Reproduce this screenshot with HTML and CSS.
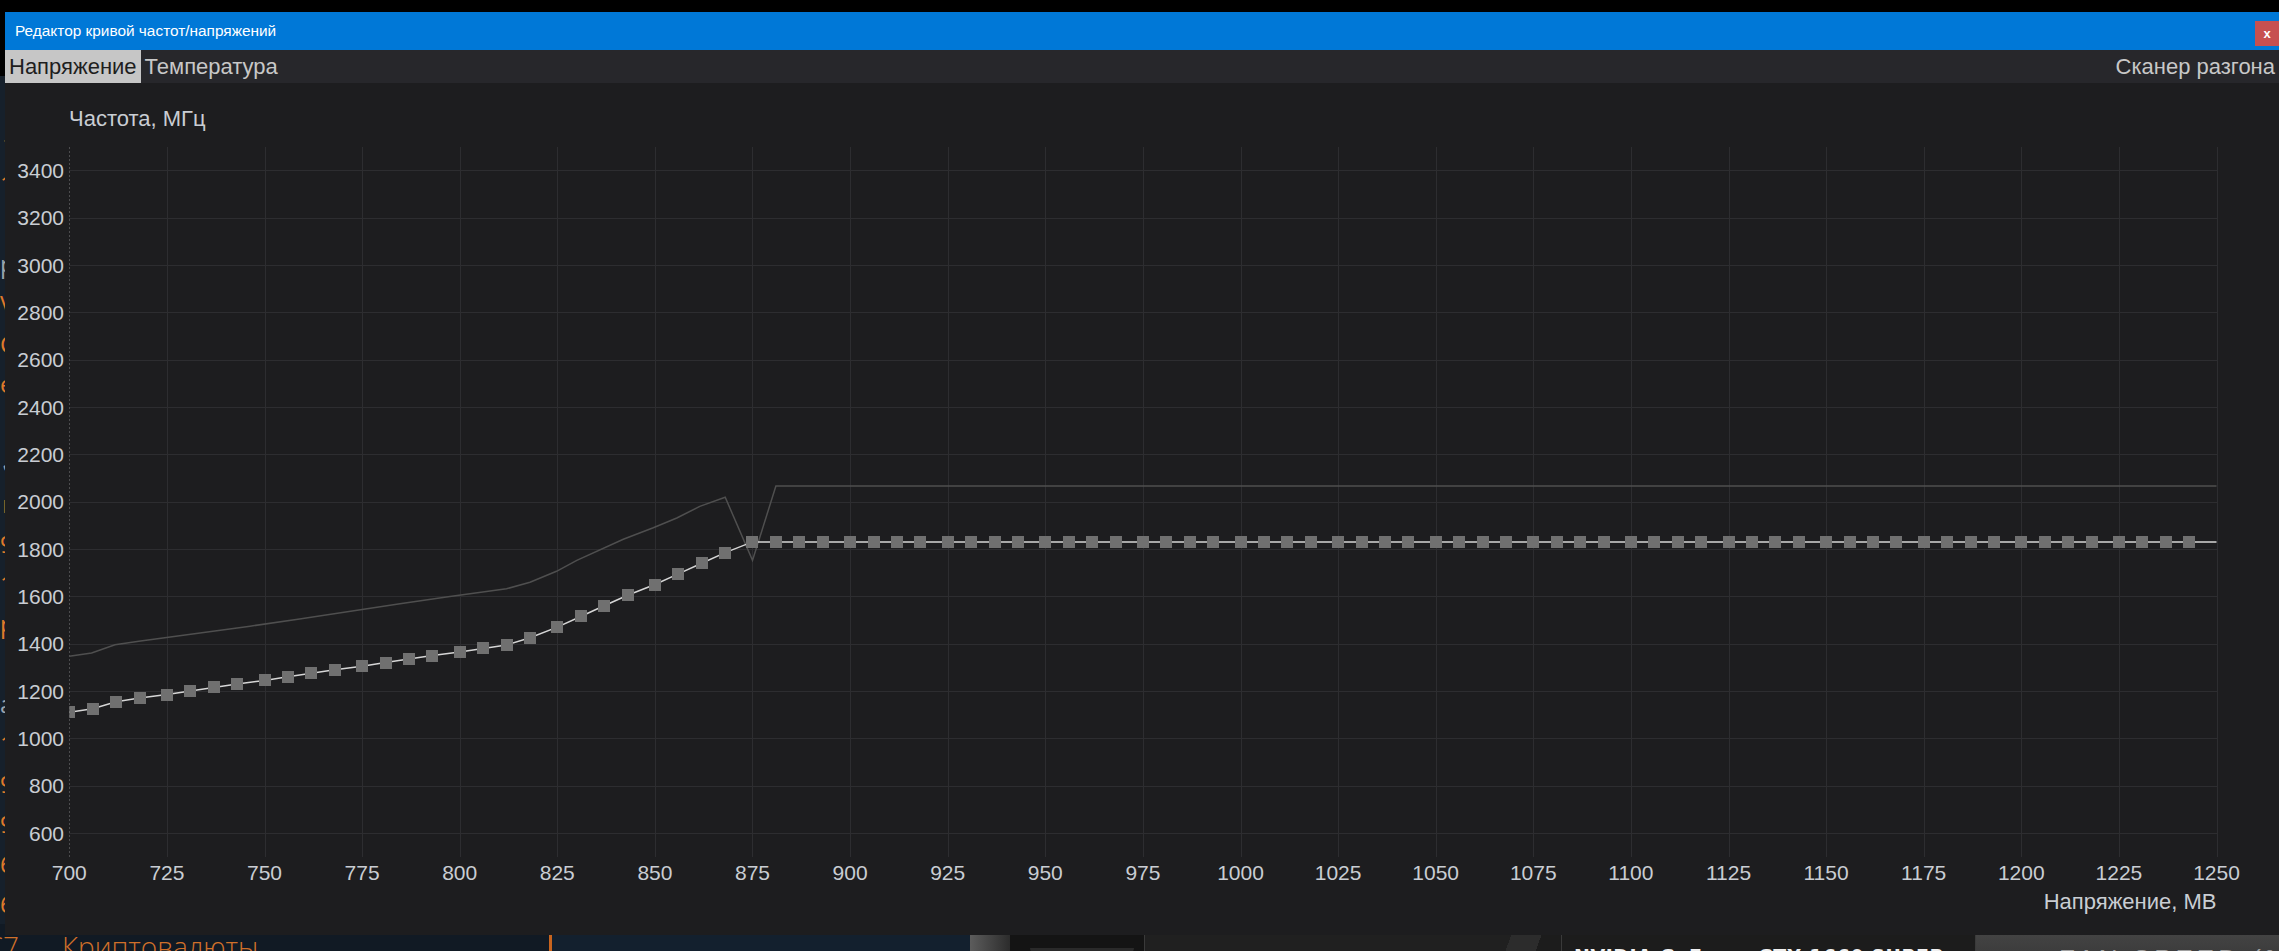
FILE: index.html
```html
<!DOCTYPE html>
<html lang="ru">
<head>
<meta charset="utf-8">
<title>Редактор кривой частот/напряжений</title>
<link rel="stylesheet" href="styles.css">
</head>
<body>
<div class="app">
  <div class="app-top"></div>
  <div class="app-mid">
    <div class="app-side">
      <div class="side-text">f<br>1<br><br><span class="g">p</span><br>V<br>C<br>e<br><br><span class="g">✓</span><br>r<br>9<br>1<br>p<br><br><span class="g">a</span><br>1<br>9<br>9<br>6<br>6</div>
    </div>
  </div>
  <div class="app-bottom">
    <div class="seg seg-crypto"><span class="c7">(С7</span><span class="crypto">Криптовалюты</span></div>
    <div class="seg seg-bar"></div>
    <div class="seg seg-news"><span class="news-o">О</span><span class="news-y">й</span></div>
    <div class="seg seg-grad"></div>
    <div class="seg seg-dark"><div class="dark-shape"></div></div>
    <div class="seg seg-img"></div>
    <div class="seg seg-gpu">NVIDIA GeForce GTX 1660 SUPER</div>
    <div class="seg seg-fan">FAN SPEED (%)</div>
  </div>
</div>

<div class="window">
  <div class="titlebar">
    <span class="title">Редактор кривой частот/напряжений</span>
    <span class="close">x</span>
  </div>
  <div class="menubar">
    <span class="menu-item active">Напряжение</span>
    <span class="menu-item">Температура</span>
    <span class="menu-spacer"></span>
    <span class="menu-item">Сканер разгона</span>
  </div>
  <div class="content">
    <svg class="chart" width="2274" height="852" viewBox="0 0 2274 852">
      <defs>
        <clipPath id="plot"><rect x="64.3" y="63.7" width="2147.2" height="710"></rect></clipPath>
      </defs>
      <g id="grid" class="grid"></g>
      <line class="axis" x1="64.5" x2="64.5" y1="63.7" y2="773.7"></line>
      <g clip-path="url(#plot)">
        <polyline id="limit" class="limit" points=""></polyline>
        <polyline id="curve" class="curve" points=""></polyline>
        <g id="pts" class="pts"></g>
      </g>
      <text class="ttl" x="64" y="43">Частота, МГц</text>
      <g class="ylab">
        <text x="59" y="94.9">3400</text>
        <text x="59" y="142.2">3200</text>
        <text x="59" y="189.5">3000</text>
        <text x="59" y="236.9">2800</text>
        <text x="59" y="284.2">2600</text>
        <text x="59" y="331.5">2400</text>
        <text x="59" y="378.9">2200</text>
        <text x="59" y="426.2">2000</text>
        <text x="59" y="473.5">1800</text>
        <text x="59" y="520.9">1600</text>
        <text x="59" y="568.2">1400</text>
        <text x="59" y="615.5">1200</text>
        <text x="59" y="662.9">1000</text>
        <text x="59" y="710.2">800</text>
        <text x="59" y="757.5">600</text>
      </g>
      <g class="xlab">
        <text x="64.3" y="797">700</text>
        <text x="161.9" y="797">725</text>
        <text x="259.5" y="797">750</text>
        <text x="357.1" y="797">775</text>
        <text x="454.7" y="797">800</text>
        <text x="552.3" y="797">825</text>
        <text x="649.9" y="797">850</text>
        <text x="747.5" y="797">875</text>
        <text x="845.1" y="797">900</text>
        <text x="942.7" y="797">925</text>
        <text x="1040.3" y="797">950</text>
        <text x="1137.9" y="797">975</text>
        <text x="1235.5" y="797">1000</text>
        <text x="1333.1" y="797">1025</text>
        <text x="1430.7" y="797">1050</text>
        <text x="1528.3" y="797">1075</text>
        <text x="1625.9" y="797">1100</text>
        <text x="1723.5" y="797">1125</text>
        <text x="1821.1" y="797">1150</text>
        <text x="1918.7" y="797">1175</text>
        <text x="2016.3" y="797">1200</text>
        <text x="2113.9" y="797">1225</text>
        <text x="2211.5" y="797">1250</text>
      </g>
      <text class="ttl ttl-x" x="2211.5" y="826">Напряжение, МВ</text>
    </svg>
  </div>
</div>
<script src="script.js"></script>
</body>
</html>
```

FILE: styles.css
```css
* { box-sizing: border-box; }
html, body { margin: 0; padding: 0; }
body {
  width: 2279px;
  height: 951px;
  overflow: hidden;
  background: #000;
  font-family: "Liberation Sans", Arial, sans-serif;
  position: relative;
}

/* background application */
.app {
  height: 951px;
  display: grid;
  grid-template-rows: 76px 1fr 40px;
}
.app-top { background: #000; }
.app-mid { background: #16202b; display: flex; }
.app-side { width: 5px; overflow: hidden; padding-top: 48px; }
.side-text {
  width: 12px;
  text-align: right;
  font: 24px/40px "Open Sans", sans-serif;
  color: #e07a2a;
}
.side-text .g { color: #9aa3ad; }

.app-bottom {
  display: flex;
  background: #111a24;
  overflow: hidden;
}
.seg { height: 40px; flex: none; overflow: hidden; }
.seg-crypto {
  width: 549px;
  background: #111a24;
  display: flex;
  font: 300 28px/40px "Open Sans", sans-serif;
  color: #d0702a;
  padding-top: 2px;
}
.c7 { width: 84px; margin-left: -22px; flex: none; }
.crypto { flex: none; }
.seg-bar { width: 3px; background: #c8641e; }
.seg-news {
  width: 418px;
  background: #13202e;
  color: #f0f0f0;
  font: 700 22px/22px "Open Sans", sans-serif;
  display: flex;
  padding-top: 33px;
}
.news-o { margin-left: 46px; }
.news-y { margin-left: 160px; }
.seg-grad { width: 40px; background: linear-gradient(to right, #5c5c5c, #2c2c2c); }
.seg-dark { width: 134px; background: #141414; padding: 24px 10px 0 20px; }
.dark-shape { height: 6px; background: #2a2a2a; border-radius: 0 0 6px 6px; }
.seg-img {
  width: 418px;
  border-left: 1px solid #3a3a3a;
  border-right: 1px solid #3a3a3a;
  background: linear-gradient(110deg, #202020 86%, #2c2c2c 86%, #2c2c2c 93%, #1c1c1c 93%);
}
.seg-gpu {
  width: 414px;
  background: #1c1c1c;
  border-right: 1px solid #3a3a3a;
  color: #f0f0f0;
  font: 700 21px/21px "DejaVu Sans Condensed", "DejaVu Sans", sans-serif;
  letter-spacing: 0.6px;
  padding: 24px 0 0 12px;
  white-space: nowrap;
}
.seg-fan {
  flex: 1;
  background: linear-gradient(#474747, #383838);
  color: #a0a0a0;
  font: 26px/26px "Liberation Sans", sans-serif;
  letter-spacing: 4px;
  padding: 22px 0 0 83px;
  white-space: nowrap;
}

/* the editor window */
.window {
  position: absolute;
  left: 5px;
  top: 12px;
  width: 2274px;
  height: 923px;
  display: flex;
  flex-direction: column;
  background: #1d1d1f;
}
.titlebar {
  height: 38px;
  flex: none;
  background: #0078d7;
  display: flex;
  align-items: center;
  padding-left: 10px;
  color: #fff;
  font-size: 15.4px;
}
.title { flex: none; }
.close {
  margin-left: auto;
  align-self: flex-start;
  margin-top: 9px;
  width: 24px;
  height: 25px;
  background: #c75050;
  color: #fff;
  font: 700 13px/25px "Liberation Sans", sans-serif;
  text-align: center;
}
.menubar {
  height: 33px;
  flex: none;
  background: #27272b;
  display: flex;
  font-size: 22px;
  line-height: 33px;
  color: #c8c8c8;
}
.menu-item { padding: 0 4px; white-space: nowrap; }
.menu-item.active { background: #c6c6c6; color: #1e1e1e; }
.menu-spacer { flex: 1; }
.content { flex: 1; background: #1d1d1f; }
.chart { display: block; }
.chart text {
  font-family: "Liberation Sans", Arial, sans-serif;
  font-size: 21px;
  fill: #c9cdd3;
}
.chart .ttl { font-size: 22px; }
.ylab text { text-anchor: end; }
.xlab text { text-anchor: middle; }
.ttl-x { text-anchor: end; }
.grid line { stroke: #2d2d30; stroke-width: 1; shape-rendering: crispEdges; }
.axis { stroke: #4c4c4e; stroke-width: 1; stroke-dasharray: 2 2; shape-rendering: crispEdges; }
.limit { fill: none; stroke: #4f4f4f; stroke-width: 1.5; }
.curve { fill: none; stroke: #d6d6d6; stroke-width: 1.5; }
.pts rect { fill: #707070; shape-rendering: crispEdges; }
```

FILE: script.js
```js
(function () {
  var NS = 'http://www.w3.org/2000/svg';
  function X(v) { return 64.3 + (v - 700) * 3.904; }
  function Y(f) { return 63.7 + (3500 - f) * 0.23667; }
  function el(tag, attrs, parent) {
    var e = document.createElementNS(NS, tag);
    for (var k in attrs) e.setAttribute(k, attrs[k]);
    parent.appendChild(e);
    return e;
  }
  function fmt(list) {
    return list.map(function (p) { return p[0].toFixed(1) + ',' + p[1].toFixed(1); }).join(' ');
  }

  var grid = document.getElementById('grid');
  var L = X(700), R = X(1250), T = Y(3500), B = Y(500);
  var f, v, x, y;
  for (f = 600; f <= 3400; f += 200) {
    y = Math.round(Y(f)) + 0.5;
    el('line', { x1: L, x2: R, y1: y, y2: y }, grid);
  }
  for (v = 725; v <= 1250; v += 25) {
    x = Math.round(X(v)) + 0.5;
    el('line', { x1: x, x2: x, y1: T, y2: B }, grid);
  }

  /* V/F curve points (mV -> MHz) */
  var freqs = [1110, 1125, 1155, 1170, 1185, 1200, 1215, 1230, 1245, 1260, 1275, 1290, 1305, 1320, 1335,
    1350, 1365, 1380, 1395, 1425, 1470, 1515, 1560, 1605, 1650, 1695, 1740, 1785, 1830];
  var pts = [];
  for (var k = 0; k <= 87; k++) {
    var vv = 700 + Math.floor(6.25 * k);
    var ff = k < freqs.length ? freqs[k] : 1830;
    pts.push([X(vv), Y(ff)]);
  }
  var linePts = pts.slice();
  linePts.push([X(1260), Y(1830)]);
  document.getElementById('curve').setAttribute('points', fmt(linePts));

  var g = document.getElementById('pts');
  pts.forEach(function (p) {
    el('rect', { x: Math.round(p[0]) - 6, y: Math.round(p[1]) - 6, width: 12, height: 12 }, g);
  });

  /* upper (limit) curve */
  var lim = [[700, 1347], [705.7, 1361], [711.7, 1396], [717.8, 1410], [746.3, 1474], [759, 1505],
    [784.7, 1569], [797.5, 1600], [812, 1632], [818, 1660], [824.8, 1706], [830, 1752], [841.9, 1841],
    [849.6, 1890], [855.6, 1931], [861.5, 1980], [868, 2019], [875, 1752], [881, 2066], [1260, 2066]];
  document.getElementById('limit').setAttribute('points', fmt(lim.map(function (p) { return [X(p[0]), Y(p[1])]; })));
})();
```
